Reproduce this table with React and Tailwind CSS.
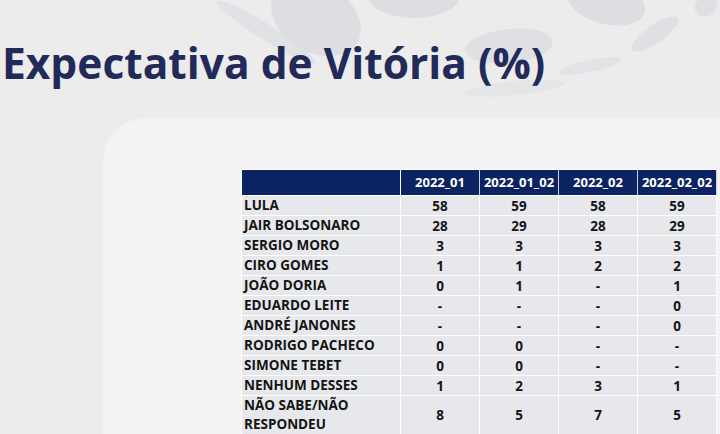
const COLS = ['2022_01', '2022_01_02', '2022_02', '2022_02_02']

const ROWS = [
  ['LULA', '58', '59', '58', '59'],
  ['JAIR BOLSONARO', '28', '29', '28', '29'],
  ['SERGIO MORO', '3', '3', '3', '3'],
  ['CIRO GOMES', '1', '1', '2', '2'],
  ['JOÃO DORIA', '0', '1', '-', '1'],
  ['EDUARDO LEITE', '-', '-', '-', '0'],
  ['ANDRÉ JANONES', '-', '-', '-', '0'],
  ['RODRIGO PACHECO', '0', '0', '-', '-'],
  ['SIMONE TEBET', '0', '0', '-', '-'],
  ['NENHUM DESSES', '1', '2', '3', '1'],
  ['NÃO SABE/NÃO RESPONDEU', '8', '5', '7', '5'],
]

function Blobs() {
  return (
    <svg className="absolute left-0 top-0" width="720" height="120">
      <g fill="#dcdee2">
        <ellipse cx="316" cy="18" rx="48" ry="34" transform="rotate(30 316 18)" />
        <ellipse cx="266" cy="32" rx="58" ry="8" opacity="0.7" transform="rotate(32 266 32)" />
        <ellipse cx="414" cy="-4" rx="46" ry="22" />
        <ellipse cx="509" cy="46" rx="44" ry="17" opacity="0.85" transform="rotate(-6 509 46)" />
        <ellipse cx="606" cy="2" rx="40" ry="22" transform="rotate(15 606 2)" />
        <ellipse cx="655" cy="34" rx="28" ry="9" opacity="0.85" transform="rotate(-35 655 34)" />
        <ellipse cx="706" cy="6" rx="12" ry="10" opacity="0.85" transform="rotate(-40 706 6)" />
        <ellipse cx="590" cy="66" rx="32" ry="6" opacity="0.6" transform="rotate(-12 590 66)" />
        <ellipse cx="515" cy="88" rx="50" ry="7" opacity="0.45" transform="rotate(-6 515 88)" />
      </g>
    </svg>
  )
}

export default function App() {
  return (
    <div
      className="relative w-[720px] h-[434px] overflow-hidden bg-[#ececec]"
      style={{ fontFamily: '"Open Sans", "Liberation Sans", sans-serif' }}
    >
      <Blobs />
      <h1 className="relative pl-[2px] pt-[35px] h-[118px] text-[42.5px] leading-[56px] font-bold text-[#222a5a]">
        Expectativa de Vitória (%)
      </h1>
      <div className="relative ml-[103px] h-[400px] rounded-tl-[44px] bg-[#f3f3f3] pl-[138px] pt-[51px]">
        <table className="border-collapse text-[13.5px] font-bold text-[#141414]">
          <thead>
            <tr className="h-[26px] bg-[#0b2461] text-white text-[13px]">
              <th className="w-[159px] border-[1.5px] border-white"></th>
              {COLS.map((c) => (
                <th key={c} className="w-[79px] border-[1.5px] border-x-[#c9d2e6] border-y-white font-bold">
                  {c}
                </th>
              ))}
            </tr>
          </thead>
          <tbody>
            {ROWS.map((r, i) => (
              <tr key={i} className={i === ROWS.length - 1 ? 'h-[38px] bg-[#e7e8eb]' : 'h-[19.7px] bg-[#e7e8eb]'}>
                <td className="border-[1.5px] border-white pl-[2px] leading-[19px]">{r[0]}</td>
                {r.slice(1).map((v, j) => (
                  <td key={j} className="border-[1.5px] border-white text-center leading-[16px]">
                    {v}
                  </td>
                ))}
              </tr>
            ))}
          </tbody>
        </table>
      </div>
    </div>
  )
}
